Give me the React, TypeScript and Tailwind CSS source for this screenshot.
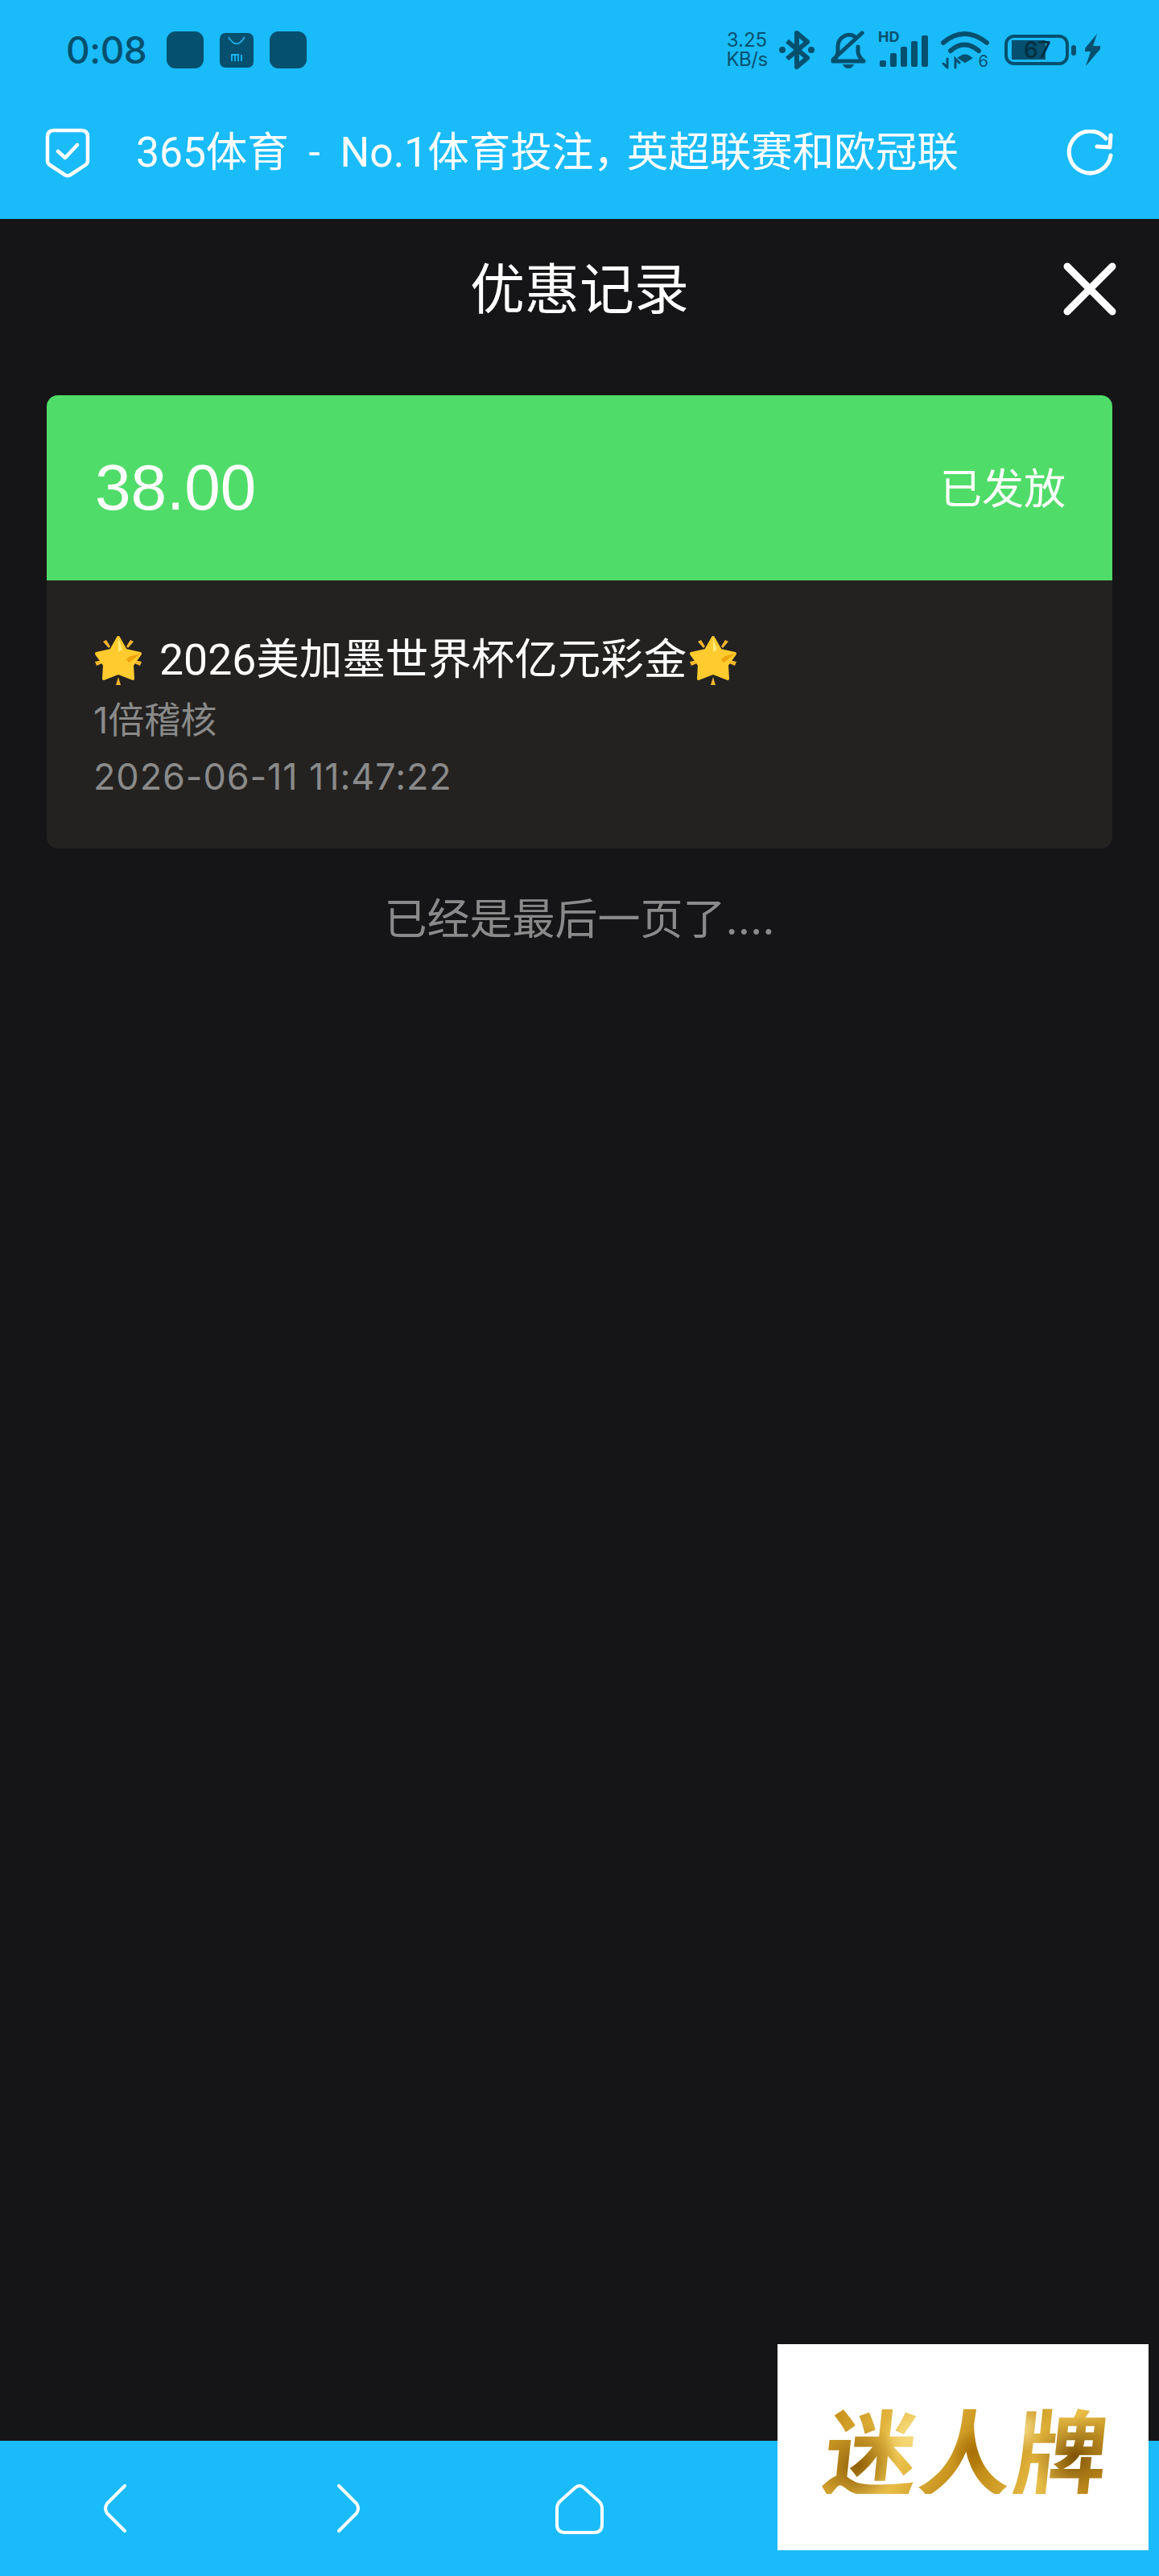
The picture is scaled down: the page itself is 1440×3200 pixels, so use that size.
const cjk = "font-['Inter','Noto_Sans_CJK_SC',sans-serif]";

function GlowStar({ className }: { className: string }) {
  return (
    <svg viewBox="0 0 60 62" className={className}>
      {/* rays between the points */}
      <path d="M11 8 L15 6 L20 14 L18 16 Z M49 8 L45 6 L40 14 L42 16 Z" fill="#F6B62D" />
      <path d="M1 33 L10 31 L10 35 L3 38 Z M59 33 L50 31 L50 35 L57 38 Z" fill="#F6B62D" />
      <path d="M30 52 L33 62 L27 62 Z" fill="#F6B62D" />
      <path
        d="M30 3 L39 19 L57 23 L47 37 L48 54 L30 47 L12 54 L13 37 L3 23 L21 19 Z"
        fill="#FFCB2E"
        stroke="#FFCB2E"
        strokeWidth="4"
        strokeLinejoin="round"
      />
      <path d="M30 3 L35 18 L30 21 Z" fill="#FFEB7A" />
      <path d="M58 23 L43 34 L40 30 L45 26 Z" fill="#EFA30C" />
    </svg>
  );
}

function ShieldIcon() {
  return (
    <svg viewBox="0 0 56 62" className="h-[62px] w-[56px]" fill="none" stroke="#fff">
      <path
        d="M11 3 H45 Q53 3 53 11 V41 Q53 44 50 46 L31 58.5 Q28 60 25 58.5 L6 46 Q3 44 3 41 V11 Q3 3 11 3 Z"
        strokeWidth="4.5"
      />
      <path d="M16 29 L25 37 L40 21" strokeWidth="4.5" strokeLinecap="round" strokeLinejoin="round" />
    </svg>
  );
}

function RefreshIcon() {
  return (
    <svg viewBox="0 0 58 58" className="h-[58px] w-[58px]" fill="none" stroke="#fff" strokeWidth="5" strokeLinecap="round" strokeLinejoin="round">
      <path d="M49 11 A26 26 0 1 0 55 32" />
      <path d="M38 21 L54 22 L55 7" />
    </svg>
  );
}

function StatusIcons() {
  const c = "#04506E";
  return (
    <div className="flex items-center text-[#04506E]">
      <div className="flex w-[56px] flex-col text-[24px] leading-[24px] font-['Inter','Liberation_Sans',sans-serif]">
        <span className="text-center">3.25</span>
        <span className="text-center tracking-[-0.5px]">KB/s</span>
      </div>
      <svg viewBox="0 0 44 48" className="ml-[12px] h-[48px] w-[44px]" fill="none" stroke={c} strokeWidth="6" strokeLinejoin="round">
        <path d="M10 13 L35 34 L22 45 V3 L35 14 L10 35" />
        <circle cx="4" cy="24" r="4" fill={c} stroke="none" />
        <circle cx="40" cy="24" r="4" fill={c} stroke="none" />
      </svg>
      <svg viewBox="0 0 44 48" className="ml-[20px] h-[48px] w-[44px]" fill="none" stroke={c} strokeWidth="5" strokeLinecap="round" strokeLinejoin="round">
        <path d="M9 27 V19 A14 14 0 0 1 31 8" />
        <path d="M34 20 V27 Q35 33 41 38 H3 Q8 33 9 27" />
        <path d="M3 36 L39 3" />
        <path d="M15 42 H29 Q27 47 22 47 Q17 47 15 42 Z" fill={c} stroke="none" />
      </svg>
      <div className="relative ml-[15px] h-[48px] w-[63px]">
        <span className="absolute left-0 top-[-2px] text-[18px] font-bold leading-[20px] font-['Inter','Liberation_Sans',sans-serif]">HD</span>
        <div className="absolute bottom-[3px] left-[2px] flex items-end gap-[5px]">
          <div className="h-[8px] w-[8px] rounded-[2px] bg-[#04506E]" />
          <div className="h-[17px] w-[8px] rounded-[2px] bg-[#04506E]" />
          <div className="h-[25px] w-[8px] rounded-[2px] bg-[#04506E]" />
          <div className="h-[32px] w-[8px] rounded-[2px] bg-[#04506E]" />
          <div className="h-[39px] w-[8px] rounded-[2px] bg-[#04506E]" />
        </div>
      </div>
      <div className="relative ml-[15px] h-[48px] w-[60px]">
        <svg viewBox="0 0 60 48" className="h-[48px] w-[60px]" fill="none" stroke={c} strokeWidth="6" strokeLinecap="round">
          <path d="M3 15 Q29 -7 57 15" />
          <path d="M12 25 Q29 10 47 25" />
          <path d="M22 34 L30 39 L38 34 Q30 27 22 34 Z" fill={c} strokeWidth="2" />
          <path d="M8 35 V46 M3 41 L8 46 M18 46 V35 L23 40" strokeWidth="3" />
        </svg>
        <span className="absolute bottom-0 right-[1px] text-[20px] leading-[20px] font-['Inter','Liberation_Sans',sans-serif]">6</span>
      </div>
      <div className="ml-[19px] flex h-[38px] w-[80px] rounded-[12px] border-[4px] border-[#04506E] py-[3px] pl-[5px]">
        <div className="w-[42px] bg-[#04506E] pl-[15px] text-[28px] font-medium leading-[24px] text-[#032F42] font-['Inter','Liberation_Sans',sans-serif]">
          <span className="whitespace-nowrap">67</span>
        </div>
      </div>
      <div className="ml-[3px] h-[13px] w-[6px] rounded-[3px] bg-[#04506E]" />
      <svg viewBox="0 0 22 40" className="ml-[9px] h-[40px] w-[22px]" fill={c}>
        <path d="M17 0 L2 18 L2 22 L9 22 L3 40 L21 19 L21 15 L12 15 Z" />
      </svg>
    </div>
  );
}

function TopBar() {
  return (
    <header className="h-[272px] shrink-0 bg-[#1ABBF9]">
      <div className="flex h-[124px] items-center justify-between pl-[82px] pr-[72px]">
        <div className="flex items-center">
          <span className="w-[100px] text-[46px] font-medium tracking-[-0.5px] font-['Inter','Liberation_Sans',sans-serif] text-[#04506E]">0:08</span>
          <div className="ml-[25px] h-[46px] w-[46px] rounded-[11px] bg-[#04506E]" />
          <div className="relative ml-[20px] h-[43px] w-[42px] rounded-[7px] bg-[#04506E]">
            <svg viewBox="0 0 42 43" className="absolute inset-0" fill="none" stroke="#1ABBF9" strokeWidth="1.5">
              <path d="M11 5 Q21 22 31 5" />
              <path d="M15 35 V27 H23 V35 M19 28 V35 M27 27 V35" strokeWidth="1.8" />
            </svg>
          </div>
          <div className="ml-[20px] h-[46px] w-[46px] rounded-[11px] bg-[#04506E]" />
        </div>
        <StatusIcons />
      </div>
      <div className="flex h-[132px] items-center pl-[56px] pr-[57px]">
        <ShieldIcon />
        <span className="ml-[57px] flex-1 whitespace-nowrap text-[51.5px] leading-none text-white [word-spacing:12px] font-['Roboto','Noto_Sans_CJK_SC',sans-serif]">
          365体育 - No.1体育投注<span className="mr-[-10px]">，</span>英超联赛和欧冠联
        </span>
        <RefreshIcon />
      </div>
    </header>
  );
}

function BottomNav() {
  return (
    <nav className="relative flex h-[168px] shrink-0 items-start bg-[#1ABBF9] pl-[129px] pt-[54px]">
      <svg viewBox="0 0 28 60" className="h-[60px] w-[28px]" fill="none" stroke="#fff" strokeWidth="4" strokeLinecap="round" strokeLinejoin="round">
        <path d="M26 2 L4 24 Q0 30 4 36 L26 58" />
      </svg>
      <svg viewBox="0 0 28 60" className="ml-[262px] h-[60px] w-[28px]" fill="none" stroke="#fff" strokeWidth="4" strokeLinecap="round" strokeLinejoin="round">
        <path d="M2 2 L24 24 Q28 30 24 36 L2 58" />
      </svg>
      <svg viewBox="0 0 60 62" className="ml-[243px] h-[62px] w-[60px]" fill="none" stroke="#fff" strokeWidth="4" strokeLinejoin="round">
        <path d="M25 4 Q30 0 35 4 L54 21 Q58 25 58 30 V50 Q58 60 48 60 H12 Q2 60 2 50 V30 Q2 25 6 21 Z" />
      </svg>
    </nav>
  );
}

export default function App() {
  return (
    <div className={`relative flex h-[3200px] w-[1440px] flex-col overflow-hidden bg-[#151416] ${cjk}`}>
      <TopBar />

      <main className="flex-1 px-[58px]">
        <div className="relative flex h-[174px] items-center justify-center">
          <h1 className="text-[68px] leading-none text-white">优惠记录</h1>
          <svg viewBox="0 0 66 66" className="absolute right-[-5px] top-[54px] h-[66px] w-[66px]" fill="none" stroke="#fff" strokeWidth="9" strokeLinecap="round">
            <path d="M5 5 L61 61 M61 5 L5 61" />
          </svg>
        </div>

        <section className="mt-[45px] overflow-hidden rounded-[14px]">
          <div className="flex h-[230px] items-center justify-between bg-[#50DC69] pl-[60px] pr-[58px] text-white">
            <span className="text-[80px] font-['Liberation_Sans',sans-serif]">38.00</span>
            <span className="pt-[3px] text-[52px]">已发放</span>
          </div>
          <div className="h-[333px] bg-[#232221] pl-[58px] pt-[72px]">
            <div className="flex h-[54px] items-center text-[53.5px] leading-none text-white">
              <GlowStar className="h-[62px] w-[62px]" />
              <span className="ml-[20px] font-['Roboto','Noto_Sans_CJK_SC',sans-serif]">2026美加墨世界杯亿元彩金</span>
              <GlowStar className="ml-[2px] h-[62px] w-[62px]" />
            </div>
            <p className="mt-[14px] text-[45px] leading-[68px] text-[#8A8A8A]">1倍稽核</p>
            <p className="mt-[2px] text-[45px] leading-[68px] tracking-[0.9px] text-[#8A8A8A]">2026-06-11 11:47:22</p>
          </div>
        </section>

        <p className="mt-[62px] text-center text-[53px] leading-none text-[#8A8A8A]">已经是最后一页了....</p>
      </main>

      <BottomNav />

      {/* watermark over the bottom bar */}
      <div className="absolute left-[966px] top-[2912px] flex h-[256px] w-[461px] items-center justify-center bg-white pl-[10px]">
        <span className="-skew-x-6 bg-[radial-gradient(circle_at_12%_70%,#8F5E06_0,transparent_16%),radial-gradient(circle_at_30%_35%,#F7DE86_0,transparent_14%),radial-gradient(circle_at_52%_55%,#A76F08_0,transparent_14%),radial-gradient(circle_at_68%_30%,#F7E08E_0,transparent_12%),radial-gradient(circle_at_88%_60%,#7E5205_0,transparent_16%),linear-gradient(115deg,#C28A14_0%,#EFC650_30%,#BD850F_55%,#E9BE48_78%,#B27A0C_100%)] bg-clip-text text-[116px] font-bold leading-none tracking-[2px] text-transparent font-['Noto_Sans_CJK_SC',sans-serif]">
          迷人牌
        </span>
      </div>
    </div>
  );
}
